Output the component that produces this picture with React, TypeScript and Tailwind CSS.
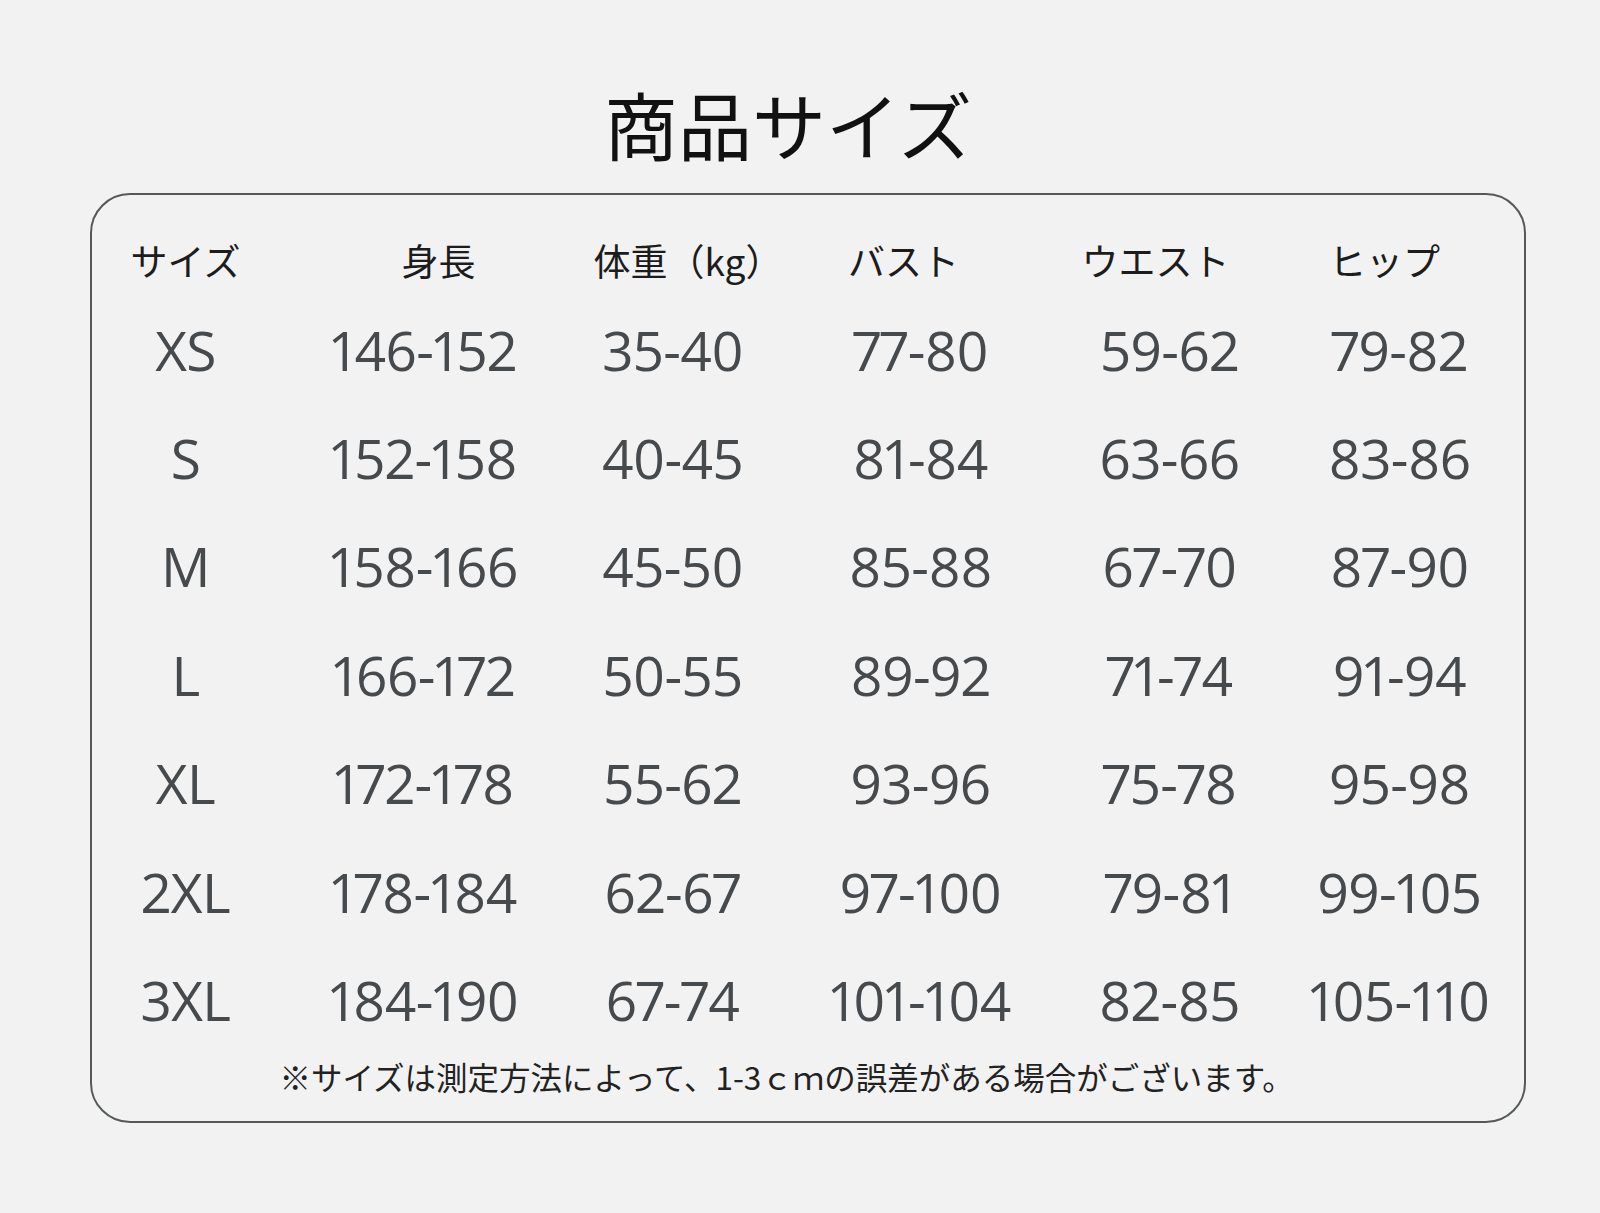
import React from "react";

const rows: string[][] = [
  ["XS", "146-152", "35-40", "77-80", "59-62", "79-82"],
  ["S", "152-158", "40-45", "81-84", "63-66", "83-86"],
  ["M", "158-166", "45-50", "85-88", "67-70", "87-90"],
  ["L", "166-172", "50-55", "89-92", "71-74", "91-94"],
  ["XL", "172-178", "55-62", "93-96", "75-78", "95-98"],
  ["2XL", "178-184", "62-67", "97-100", "79-81", "99-105"],
  ["3XL", "184-190", "67-74", "101-104", "82-85", "105-110"],
];

const cellPad = ["", "pl-[7px]", "pl-[4px]", "pl-[4px]", "pl-[2px]", "pl-[6px]"];

const jp = "font-['Noto_Sans_CJK_JP','Noto_Sans',sans-serif]";

export default function App() {
  return (
    <div className="w-[1600px] h-[1213px] bg-[#f2f2f2] overflow-hidden">
      <div className="pt-[86px] flex justify-center pr-[24px]">
        <h1 className={`${jp} text-[74px] leading-none font-normal text-[#111111]`}>
          商品サイズ
        </h1>
      </div>
      <div className="ml-[90px] mt-[33px] w-[1436px] h-[930px] border-[2.5px] border-[#55595b] rounded-[40px] pt-[35px] pl-[7.5px]">
        <div
          className={`grid grid-cols-[172px_298px_202px_294px_206px_250px] h-[60px] items-center ${jp} text-[37px] leading-none text-[#1c1c1c]`}
        >
          <div className="flex justify-center">サイズ</div>
          <div className="flex justify-center pl-[36px]">身長</div>
          <div className="flex justify-center pl-[24px]">体重（kg）</div>
          <div className="flex justify-center pr-[30px]">バスト</div>
          <div className="flex justify-center pr-[26px]">ウエスト</div>
          <div className="flex justify-center pr-[24px]">ヒップ</div>
        </div>
        <div className="mt-[5px] flex flex-col">
          {rows.map((r) => (
            <div
              key={r[0]}
              className="grid grid-cols-[172px_298px_202px_294px_206px_250px] h-[108.4px] items-center font-['Open_Sans','Noto_Sans',sans-serif] proportional-nums text-[55px] leading-none tracking-[-0.6px] text-[#464a4d]"
            >
              {r.map((c, i) => (
                <div key={i} className={`flex justify-center ${cellPad[i]}`}>
                  {c}
                </div>
              ))}
            </div>
          ))}
        </div>
        <div
          className={`h-[46px] flex items-center pl-[180px] ${jp} text-[31.5px] leading-none text-[#222222]`}
        >
          ※サイズは測定方法によって、1-3ｃｍの誤差がある場合がございます。
        </div>
      </div>
    </div>
  );
}
